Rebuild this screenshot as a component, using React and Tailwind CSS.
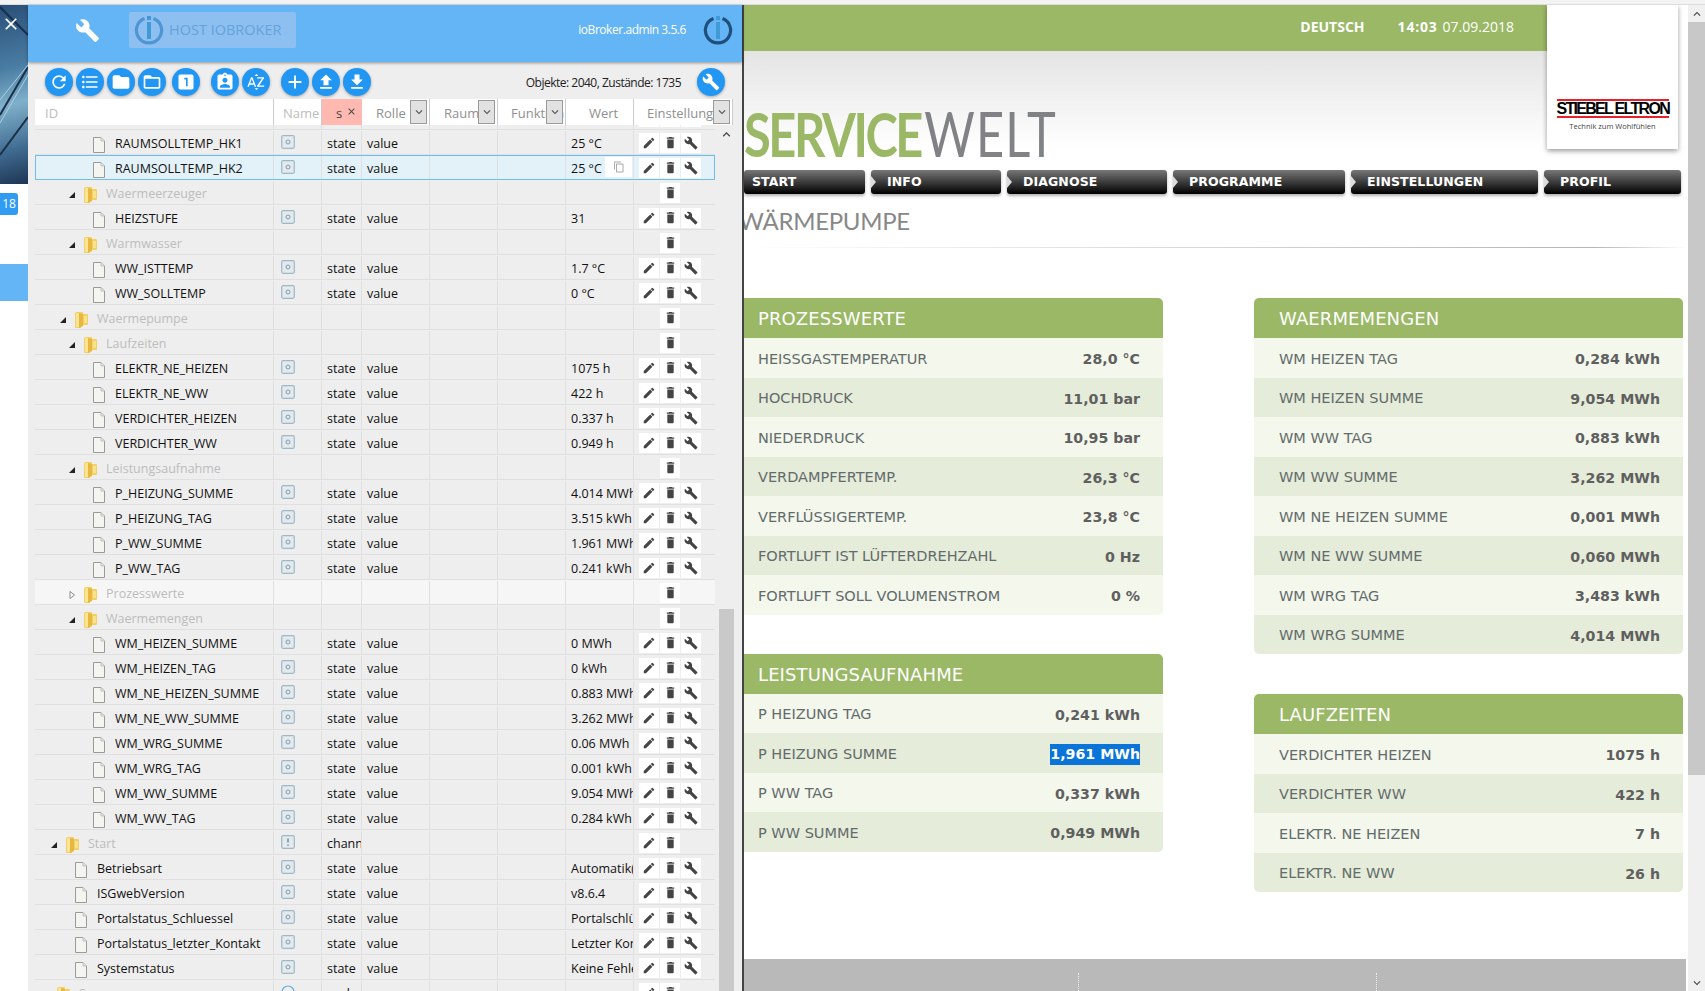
import {
  MdAdd,
  MdAssignmentInd,
  MdBuild,
  MdClose,
  MdContentCopy,
  MdDelete,
  MdEdit,
  MdFileDownload,
  MdFileUpload,
  MdFolder,
  MdFolderOpen,
  MdFormatListBulleted,
  MdKeyboardArrowDown,
  MdKeyboardArrowUp,
  MdLooksOne,
  MdRefresh,
  MdSortByAlpha,
} from 'react-icons/md';

const leftFont = "font-['Open_Sans','Noto_Sans',sans-serif]";
const verdana = "font-['DejaVu_Sans',sans-serif]";

// tree indent per row kind
const folderPad = { 0: 'pl-[6px]', 1: 'pl-[15px]', 2: 'pl-[24px]', 3: 'pl-[33px]' };
const filePad = { 2: 'pl-[40px]', 3: 'pl-[58px]' };

const rows = [
  { id: 'RAUMSOLLTEMP_HK1', lvl: 3, value: '25 °C' },
  { id: 'RAUMSOLLTEMP_HK2', lvl: 3, value: '25 °C', selected: true },
  { id: 'Waermeerzeuger', lvl: 3, folder: true },
  { id: 'HEIZSTUFE', lvl: 3, value: '31' },
  { id: 'Warmwasser', lvl: 3, folder: true },
  { id: 'WW_ISTTEMP', lvl: 3, value: '1.7 °C' },
  { id: 'WW_SOLLTEMP', lvl: 3, value: '0 °C' },
  { id: 'Waermepumpe', lvl: 2, folder: true },
  { id: 'Laufzeiten', lvl: 3, folder: true },
  { id: 'ELEKTR_NE_HEIZEN', lvl: 3, value: '1075 h' },
  { id: 'ELEKTR_NE_WW', lvl: 3, value: '422 h' },
  { id: 'VERDICHTER_HEIZEN', lvl: 3, value: '0.337 h' },
  { id: 'VERDICHTER_WW', lvl: 3, value: '0.949 h' },
  { id: 'Leistungsaufnahme', lvl: 3, folder: true },
  { id: 'P_HEIZUNG_SUMME', lvl: 3, value: '4.014 MWh' },
  { id: 'P_HEIZUNG_TAG', lvl: 3, value: '3.515 kWh' },
  { id: 'P_WW_SUMME', lvl: 3, value: '1.961 MWh' },
  { id: 'P_WW_TAG', lvl: 3, value: '0.241 kWh' },
  { id: 'Prozesswerte', lvl: 3, folder: true, closed: true },
  { id: 'Waermemengen', lvl: 3, folder: true },
  { id: 'WM_HEIZEN_SUMME', lvl: 3, value: '0 MWh' },
  { id: 'WM_HEIZEN_TAG', lvl: 3, value: '0 kWh' },
  { id: 'WM_NE_HEIZEN_SUMME', lvl: 3, value: '0.883 MWh' },
  { id: 'WM_NE_WW_SUMME', lvl: 3, value: '3.262 MWh' },
  { id: 'WM_WRG_SUMME', lvl: 3, value: '0.06 MWh' },
  { id: 'WM_WRG_TAG', lvl: 3, value: '0.001 kWh' },
  { id: 'WM_WW_SUMME', lvl: 3, value: '9.054 MWh' },
  { id: 'WM_WW_TAG', lvl: 3, value: '0.284 kWh' },
  { id: 'Start', lvl: 1, folder: true, channel: true },
  { id: 'Betriebsart', lvl: 2, value: 'Automatik(' },
  { id: 'ISGwebVersion', lvl: 2, value: 'v8.6.4' },
  { id: 'Portalstatus_Schluessel', lvl: 2, value: 'Portalschlüssel' },
  { id: 'Portalstatus_letzter_Kontakt', lvl: 2, value: 'Letzter Kontakt' },
  { id: 'Systemstatus', lvl: 2, value: 'Keine Fehler' },
  { id: 'Sensor', lvl: 0, folder: true, node: true },
];

const prozess = [
  ['HEISSGASTEMPERATUR', '28,0 °C'],
  ['HOCHDRUCK', '11,01 bar'],
  ['NIEDERDRUCK', '10,95 bar'],
  ['VERDAMPFERTEMP.', '26,3 °C'],
  ['VERFLÜSSIGERTEMP.', '23,8 °C'],
  ['FORTLUFT IST LÜFTERDREHZAHL', '0 Hz'],
  ['FORTLUFT SOLL VOLUMENSTROM', '0 %'],
];
const leistung = [
  ['P HEIZUNG TAG', '0,241 kWh'],
  ['P HEIZUNG SUMME', '1,961 MWh', true],
  ['P WW TAG', '0,337 kWh'],
  ['P WW SUMME', '0,949 MWh'],
];
const mengen = [
  ['WM HEIZEN TAG', '0,284 kWh'],
  ['WM HEIZEN SUMME', '9,054 MWh'],
  ['WM WW TAG', '0,883 kWh'],
  ['WM WW SUMME', '3,262 MWh'],
  ['WM NE HEIZEN SUMME', '0,001 MWh'],
  ['WM NE WW SUMME', '0,060 MWh'],
  ['WM WRG TAG', '3,483 kWh'],
  ['WM WRG SUMME', '4,014 MWh'],
];
const laufzeiten = [
  ['VERDICHTER HEIZEN', '1075 h'],
  ['VERDICHTER WW', '422 h'],
  ['ELEKTR. NE HEIZEN', '7 h'],
  ['ELEKTR. NE WW', '26 h'],
];

const menu = [
  ['START', 'w-[121px] pl-[8px]'],
  ['INFO', 'w-[130px] pl-[16px]'],
  ['DIAGNOSE', 'w-[160px] pl-[16px]'],
  ['PROGRAMME', 'w-[172px] pl-[16px]'],
  ['EINSTELLUNGEN', 'w-[187px] pl-[16px]'],
  ['PROFIL', 'w-[137px] pl-[16px]'],
];

const IoLogo = ({ className }) => (
  <svg viewBox="0 0 30 30" className={className} fill="none">
    <path d="M10.5 3.6 A12.6 12.6 0 1 0 19.5 3.6" stroke="currentColor" strokeWidth="3.2" />
    <rect x="13" y="1" width="4" height="4" fill="#3f9ad6" />
    <rect x="13" y="7" width="4" height="17" fill="#3f9ad6" />
  </svg>
);

const FileIcon = () => (
  <svg viewBox="0 0 12 16" className="w-[12px] h-[16px] shrink-0 mr-[10px]">
    <path d="M.5.5h7.5l3.5 3.5v11.500h-11z" fill="#f4f4f0" stroke="#9a9a9a" />
    <path d="M8 .5v3.500h3.500" fill="#e2e2e2" stroke="#c0c0c0" />
  </svg>
);

const FolderIcon = () => (
  <svg viewBox="0 0 13 16" className="w-[13px] h-[16px] shrink-0 mr-[9px]">
    <path d="M0 2 Q0 0 2 0 H7 Q8 0 8 1 V2 H12 Q13 2 13 3 V12 Q13 13 12 13 H6 V16 H1 Q0 16 0 15 Z" fill="#f3d065" />
    <path d="M1 2 Q1 1 2 1 H4 V15 H1 Z" fill="#f9e596" />
    <path d="M4 1 L8 2 V14 L4 16 Z" fill="#e8b73f" />
    <path d="M9 4 H12 V11 H9 Z" fill="#f9e28c" />
  </svg>
);

const TreeArrow = ({ closed }) => (
  <svg viewBox="0 0 8 8" className="w-[8px] h-[8px] shrink-0 mr-[8px]">
    {closed ? (
      <path d="M2 .5 L6.500 4 L2 7.500 Z" fill="#fff" stroke="#888" />
    ) : (
      <path d="M7 1 V7 H1 Z" fill="#222" />
    )}
  </svg>
);

const TypeIcon = ({ kind }) => (
  <svg viewBox="0 0 14 14" className="w-[14px] h-[14px] -mt-[6px]" fill="none">
    {kind === 'node' ? (
      <circle cx="7" cy="7" r="6" stroke="#6aa9d8" strokeWidth="1.2" />
    ) : (
      <>
        <rect x=".7" y=".7" width="12.600" height="12.600" rx="1.500" fill="#e3e9ec" stroke="#9db8c6" strokeWidth="1.200" />
        {kind === 'channel' ? (
          <path d="M7 3.500v4M7 9.500v1.200" stroke="#5b7f92" strokeWidth="1.300" />
        ) : (
          <circle cx="7" cy="7" r="2" stroke="#7f9fb0" />
        )}
      </>
    )}
  </svg>
);

const ActionBox = ({ children }) => (
  <span className="w-[20px] h-[20px] bg-white flex items-center justify-center text-[#444]">{children}</span>
);

const Actions = ({ row }) => {
  const isFolder = row.folder;
  const showEdit = !isFolder || row.channel || row.node;
  const showBuild = !isFolder;
  return (
    <div className="flex items-center gap-[1px] pl-[5px] h-full">
      {showEdit ? (
        <ActionBox>
          <MdEdit size={14} />
        </ActionBox>
      ) : (
        <span className="w-[20px] h-[20px]" />
      )}
      <ActionBox>
        <MdDelete size={15} className="scale-x-[.85]" />
      </ActionBox>
      {showBuild && (
        <ActionBox>
          <MdBuild size={14} />
        </ActionBox>
      )}
    </div>
  );
};

const cell = 'h-full border-r border-[#e0e0e0] overflow-hidden whitespace-nowrap flex items-center pt-[4px]';

const TreeRow = ({ row }) => {
  const bg = row.selected
    ? 'bg-[#e3f1f9] outline outline-1 -outline-offset-1 outline-[#74bce8]'
    : row.closed
      ? 'bg-[#f6f6f6]'
      : 'bg-[#eeeeee]';
  return (
    <div className={`relative h-[25px] grid grid-cols-[239px_48px_40px_68px_68px_68px_68px_81px] border-b border-[#e0e0e0] text-[12.5px] pt-[1px] ${bg}`}>
      <div className={`${cell} ${row.folder ? folderPad[row.lvl] : filePad[row.lvl]}`}>
        {row.folder ? <TreeArrow closed={row.closed || row.node} /> : null}
        {row.folder ? <FolderIcon /> : <FileIcon />}
        <span className={row.folder ? 'text-[#bdbdbd]' : 'text-[#111]'}>{row.id}</span>
      </div>
      <div className={`${cell} pl-[7px]`}>
        {!row.folder ? <TypeIcon kind="state" /> : row.channel ? <TypeIcon kind="channel" /> : row.node ? <TypeIcon kind="node" /> : null}
      </div>
      <div className={`${cell} pl-[5px] text-[#111]`}>{row.folder ? (row.channel ? 'channel' : row.node ? 'node' : '') : 'state'}</div>
      <div className={`${cell} pl-[5px] text-[#111]`}>{row.folder ? '' : 'value'}</div>
      <div className={cell} />
      <div className={cell} />
      <div className={`${cell} pl-[5px] text-[#111]`}>{row.value}</div>
      <Actions row={row} />
      {row.selected && (
        <span className="absolute left-[570px] top-[2px] w-[27px] h-[20px] bg-white flex items-center justify-center text-[#aaa]">
          <MdContentCopy size={12} />
        </span>
      )}
    </div>
  );
};

const HeadCell = ({ label, filter, light, className = '' }) => (
  <div className={`relative h-full bg-white border-r border-[#ccc] overflow-hidden flex items-center whitespace-nowrap pt-[3px] ${className}`}>
    <span className={light ? 'text-[#bdbdbd]' : 'text-[#8f8f8f]'}>{label}</span>
    {filter && (
      <span className="absolute right-[2px] top-[1px] w-[17px] h-[24px] bg-[#e2e2e2] border border-[#9a9a9a] flex items-center justify-center text-[#555]">
        <MdKeyboardArrowDown size={14} />
      </span>
    )}
  </div>
);

const Round = ({ children, className = '' }) => (
  <span className={`w-[28px] h-[28px] rounded-full bg-[#2196f3] text-white flex items-center justify-center shadow-[0_1px_3px_rgba(0,0,0,0.3)] shrink-0 ${className}`}>
    {children}
  </span>
);

const Toolbar = () => (
  <div className="h-[37px] pt-[6px] pl-[17px] pr-[17px] flex items-start bg-[#eeeeee]">
    <div className="flex gap-[3px]">
      <Round><MdRefresh size={20} /></Round>
      <Round><MdFormatListBulleted size={20} /></Round>
      <Round><MdFolder size={20} /></Round>
      <Round><MdFolderOpen size={20} /></Round>
    </div>
    <Round className="ml-[6px]"><MdLooksOne size={20} /></Round>
    <div className="flex gap-[3px] ml-[11px]">
      <Round><MdAssignmentInd size={20} /></Round>
      <Round><MdSortByAlpha size={20} /></Round>
    </div>
    <div className="flex gap-[3px] ml-[11px]">
      <Round><MdAdd size={22} /></Round>
      <Round><MdFileUpload size={20} /></Round>
      <Round><MdFileDownload size={20} /></Round>
    </div>
    <span className="ml-auto mr-[16px] mt-[6px] text-[12px] tracking-[-.5px] text-[#222]">Objekte: 2040, Zustände: 1735</span>
    <Round><MdBuild size={18} /></Round>
  </div>
);

const ObjectTable = () => (
  <div className="flex-1 min-h-0 flex flex-col bg-[#eeeeee] pl-[7px] overflow-hidden">
    <div className="h-[26px] w-[698px] shrink-0 grid grid-cols-[239px_48px_40px_68px_68px_68px_68px_99px] text-[13px]">
      <HeadCell label="ID" light className="pl-[10px]" />
      <HeadCell label="Name" light className="pl-[9px]" />
      <div className="h-full bg-[#ffb9b0] flex items-center pl-[14px] gap-[4px] text-[#444] pt-[3px]">
        s <MdClose size={11} className="-mt-[4px]" />
      </div>
      <HeadCell label="Rolle" filter className="pl-[14px]" />
      <HeadCell label="Raum" filter className="pl-[14px]" />
      <HeadCell label="Funktion" filter className="pl-[13px]" />
      <HeadCell label="Wert" className="pl-[23px]" />
      <HeadCell label="Einstellungen" filter className="pl-[13px]" />
    </div>
    <div className="flex-1 min-h-0 flex">
      <div className="w-[680px] h-full overflow-hidden">
        <div className="-mt-[20px]">
          <div className="h-[25px] grid grid-cols-[239px_48px_40px_68px_68px_68px_68px_81px] border-b border-[#e0e0e0]">
            <div className={cell} />
            <div className={cell} />
            <div className={cell} />
            <div className={cell} />
            <div className={cell} />
            <div className={cell} />
            <div className={cell} />
            <Actions row={{}} />
          </div>
          {rows.map((row) => (
            <TreeRow key={row.id} row={row} />
          ))}
        </div>
      </div>
      <div className="w-[15px] ml-[4px] h-full flex flex-col">
        <div className="h-[484px] flex justify-center pt-[2px] text-[#444]">
          <MdKeyboardArrowUp size={15} />
        </div>
        <div className="flex-1 bg-[#c9c9c9]" />
      </div>
    </div>
  </div>
);

const SideStrip = () => (
  <div className="w-[28px] shrink-0 bg-white flex flex-col">
    <div className="relative h-[179px] overflow-hidden bg-[linear-gradient(165deg,#2a4f78_0%,#4a7da3_35%,#7fb0cb_55%,#3f6a90_80%,#1d3552_100%)]">
      <svg viewBox="0 0 28 179" className="w-full h-full">
        <path d="M0 2 L28 30" stroke="#16304d" strokeWidth="2" />
        <path d="M0 110 L28 62 M0 150 L28 112" stroke="#1c3148" strokeWidth="2" />
        <path d="M0 95 L28 60 M0 118 L28 70" stroke="#a9cfe2" strokeWidth="1" />
      </svg>
      <MdClose size={20} className="absolute left-[1px] top-[9px] text-white" />
    </div>
    <div className={`mt-[9px] w-[18px] h-[22px] rounded-r-[3px] bg-[#2f9bf2] text-white text-[12px] flex items-center justify-center ${leftFont}`}>
      18
    </div>
    <div className="mt-[49px] h-[37px] bg-[#64b5f6]" />
  </div>
);

const LeftPanel = () => (
  <div className={`w-[714px] shrink-0 flex flex-col ${leftFont}`}>
    <div className="h-[57px] pb-[7px] shrink-0 bg-[#64b5f6] flex items-center shadow-[0_1px_3px_rgba(0,0,0,0.4)] relative z-10">
      <MdBuild size={25} className="ml-[47px] text-white" />
      <div className="ml-[29px] w-[167px] h-[36px] bg-[#8dc0f0] rounded-[2px] flex items-center pl-[5px] text-[#64a3dc] text-[14.5px]">
        <IoLogo className="w-[30px] h-[30px] mr-[5px] text-[#4f95d4]" />
        HOST IOBROKER
      </div>
      <span className="ml-auto text-white text-[12px] tracking-[-.45px]">ioBroker.admin 3.5.6</span>
      <IoLogo className="w-[30px] h-[30px] ml-[17px] mr-[9px] text-[#1f4f7a]" />
    </div>
    <Toolbar />
    <ObjectTable />
  </div>
);

const ValueRow = ({ label, value, mark, odd, pad }) => (
  <div className={`h-[39.5px] pt-[4px] flex items-center justify-between ${pad} ${odd ? 'bg-[#e5ecd9]' : 'bg-[#f3f7ec]'}`}>
    <span className={`${verdana} text-[14.5px] text-[#636b6b]`}>{label}</span>
    <span className={`${verdana} text-[14.2px] font-bold ${mark ? 'bg-[#0a74d8] text-white' : 'text-[#5f5f5f]'}`}>{value}</span>
  </div>
);

const ValueCard = ({ title, items, className = '', pad }) => (
  <div className={`rounded-[5px] overflow-hidden ${className}`}>
    <div className={`h-[40px] pt-[1px] bg-[#9ab866] flex items-center ${pad} text-white text-[18px] tracking-[.1px] ${verdana}`}>{title}</div>
    {items.map(([label, value, mark], i) => (
      <ValueRow key={label} label={label} value={value} mark={mark} odd={i % 2 === 1} pad={pad} />
    ))}
  </div>
);

const RightPanel = () => (
  <div className="flex-1 min-w-0 flex bg-white overflow-hidden">
    <div className="w-[944px] shrink-0 flex flex-col h-full overflow-hidden">
      {/* head with logo */}
      <div className="h-[144px] shrink-0 flex">
        <div className="w-[803px] flex flex-col">
          <div className="h-[46px] pb-[4px] bg-[#9ab866] flex items-center justify-end pr-[33px] text-white text-[14px] font-['Open_Sans',sans-serif]">
            <span className="font-bold mr-[33px]">DEUTSCH</span>
            <span className="font-bold tracking-[.8px] mr-[5px]">14:03</span>
            <span>07.09.2018</span>
          </div>
          <div className="flex-1 bg-[linear-gradient(#e4e4e4,#ffffff)] flex items-end leading-none font-['Lato',sans-serif] text-[61px]">
            <div className="origin-left scale-x-[.8] whitespace-nowrap -mb-[15px]">
              <span className="font-bold text-[#9ab866] tracking-[-3px]">SERVICE</span>
              <span className="text-[#808285] tracking-[1.5px] ml-[4px]">WELT</span>
            </div>
          </div>
        </div>
        <div className="w-[131px] h-full bg-white shadow-[0_2px_5px_rgba(0,0,0,0.4)] flex flex-col items-center justify-end pb-[17px] relative z-10">
          <div className="w-[112px] border-y-2 border-[#e8202a] text-center font-['Liberation_Sans',sans-serif] font-bold text-[16px] leading-[15px] text-black tracking-[-1.7px] whitespace-nowrap">
            STIEBEL ELTRON
          </div>
          <div className="text-[7.5px] mt-[3px] text-[#444] font-['Open_Sans',sans-serif]">Technik zum Wohlfühlen</div>
        </div>
      </div>
      {/* main menu */}
      <div className="mt-[21px] h-[24px] shrink-0 flex gap-[6px]">
        {menu.map(([label, size]) => (
          <div key={label} className={`relative h-full ${size} rounded-[3px] bg-[linear-gradient(#777,#000)] shadow-[0_2px_3px_rgba(0,0,0,0.3)] flex items-center ${verdana} font-bold text-[12.5px] tracking-[.1px] text-white`}>
            {label !== 'START' && (
              <span className="absolute left-0 top-[6px] w-0 h-0 border-y-[6px] border-y-transparent border-l-[5px] border-l-[#dcdcdc]" />
            )}
            {label}
          </div>
        ))}
      </div>
      <h1 className="mt-[13px] -ml-[5px] h-[28px] leading-[28px] text-[24px] tracking-[-.3px] text-[#888] font-['Lato',sans-serif]">WÄRMEPUMPE</h1>
      <div className="mt-[12px] h-[1px] shrink-0 bg-[linear-gradient(90deg,#ffffff,#b5b5b5_90%,#ffffff)]" />
      <div className="mt-[50px] flex-1 flex items-start">
        <div className="w-[419px] shrink-0 flex flex-col gap-[39px]">
          <ValueCard title="PROZESSWERTE" items={prozess} pad="pl-[14px] pr-[23px]" className="rounded-l-none" />
          <ValueCard title="LEISTUNGSAUFNAHME" items={leistung} pad="pl-[14px] pr-[23px]" className="rounded-l-none" />
        </div>
        <div className="w-[429px] ml-[91px] shrink-0 flex flex-col gap-[40px]">
          <ValueCard title="WAERMEMENGEN" items={mengen} pad="pl-[25px] pr-[23px]" />
          <ValueCard title="LAUFZEITEN" items={laufzeiten} pad="pl-[25px] pr-[23px]" />
        </div>
      </div>
      <div className="h-[32px] shrink-0 mr-[2px] bg-[#b9b9b9] flex">
        <div className="w-[335px] ml-0 h-full border-r border-dotted border-[#eee] mt-[14px]" />
        <div className="w-[298px] h-full border-r border-dotted border-[#eee] mt-[14px]" />
      </div>
    </div>
    <div className="w-[17px] shrink-0 bg-[#f0f0f0] flex flex-col items-center text-[#444]">
      <div className="h-[17px] flex items-center"><MdKeyboardArrowUp size={14} /></div>
      <div className="w-full h-[753px] bg-[#c8c8c8]" />
      <div className="mt-auto h-[17px] flex items-center"><MdKeyboardArrowDown size={14} /></div>
    </div>
  </div>
);

export default function App() {
  return (
    <div className="w-[1705px] h-[991px] overflow-hidden flex flex-col bg-white">
      <div className="h-[5px] shrink-0 bg-[#f3f3f3] border-b border-[#dcdcdc]" />
      <div className="flex-1 min-h-0 flex">
        <SideStrip />
        <LeftPanel />
        <div className="w-[2px] shrink-0 bg-[#444]" />
        <RightPanel />
      </div>
    </div>
  );
}
